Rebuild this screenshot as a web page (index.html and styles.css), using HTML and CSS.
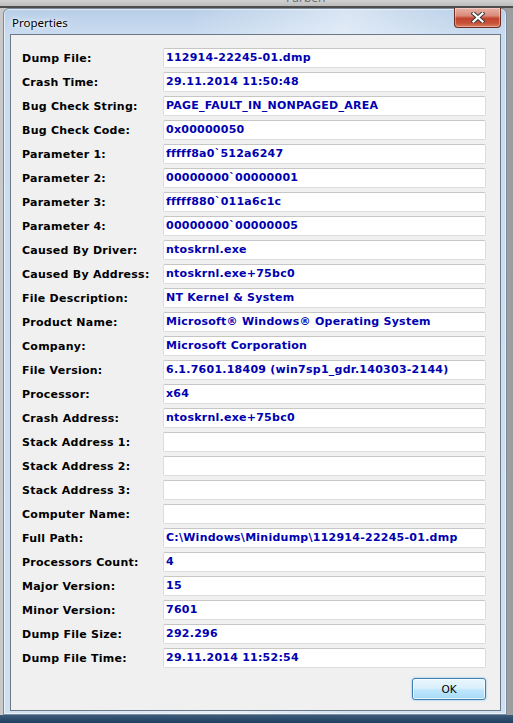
FILE: index.html
```html
<!DOCTYPE html>
<html>
<head>
<meta charset="utf-8">
<title>Properties</title>
<link rel="stylesheet" href="styles.css">
</head>
<body>
<div class="screen">
  <div class="topstrip"><span class="behind">Farben</span></div>
  <div class="window">
    <div class="titlebar">
      <span class="title">Properties</span>
      <div class="close">
        <svg width="14" height="11" viewBox="0 0 14 11">
          <path d="M2.5 1.5 L11.5 9.5 M11.5 1.5 L2.5 9.5" stroke="#3a3a3a" stroke-width="4.2" stroke-linecap="square"/>
          <path d="M2.5 1.5 L11.5 9.5 M11.5 1.5 L2.5 9.5" stroke="#ffffff" stroke-width="2.2" stroke-linecap="square"/>
        </svg>
      </div>
    </div>
    <div class="client">
      <div class="rows">
        <div class="row"><span class="label">Dump File:</span><span class="value">112914-22245-01.dmp</span></div>
        <div class="row"><span class="label">Crash Time:</span><span class="value">29.11.2014 11:50:48</span></div>
        <div class="row"><span class="label">Bug Check String:</span><span class="value">PAGE_FAULT_IN_NONPAGED_AREA</span></div>
        <div class="row"><span class="label">Bug Check Code:</span><span class="value">0x00000050</span></div>
        <div class="row"><span class="label">Parameter 1:</span><span class="value">fffff8a0`512a6247</span></div>
        <div class="row"><span class="label">Parameter 2:</span><span class="value">00000000`00000001</span></div>
        <div class="row"><span class="label">Parameter 3:</span><span class="value">fffff880`011a6c1c</span></div>
        <div class="row"><span class="label">Parameter 4:</span><span class="value">00000000`00000005</span></div>
        <div class="row"><span class="label">Caused By Driver:</span><span class="value">ntoskrnl.exe</span></div>
        <div class="row"><span class="label">Caused By Address:</span><span class="value">ntoskrnl.exe+75bc0</span></div>
        <div class="row"><span class="label">File Description:</span><span class="value">NT Kernel &amp; System</span></div>
        <div class="row"><span class="label">Product Name:</span><span class="value">Microsoft® Windows® Operating System</span></div>
        <div class="row"><span class="label">Company:</span><span class="value">Microsoft Corporation</span></div>
        <div class="row"><span class="label">File Version:</span><span class="value">6.1.7601.18409 (win7sp1_gdr.140303-2144)</span></div>
        <div class="row"><span class="label">Processor:</span><span class="value">x64</span></div>
        <div class="row"><span class="label">Crash Address:</span><span class="value">ntoskrnl.exe+75bc0</span></div>
        <div class="row"><span class="label">Stack Address 1:</span><span class="value"></span></div>
        <div class="row"><span class="label">Stack Address 2:</span><span class="value"></span></div>
        <div class="row"><span class="label">Stack Address 3:</span><span class="value"></span></div>
        <div class="row"><span class="label">Computer Name:</span><span class="value"></span></div>
        <div class="row"><span class="label">Full Path:</span><span class="value">C:\Windows\Minidump\112914-22245-01.dmp</span></div>
        <div class="row"><span class="label">Processors Count:</span><span class="value">4</span></div>
        <div class="row"><span class="label">Major Version:</span><span class="value">15</span></div>
        <div class="row"><span class="label">Minor Version:</span><span class="value">7601</span></div>
        <div class="row"><span class="label">Dump File Size:</span><span class="value">292.296</span></div>
        <div class="row"><span class="label">Dump File Time:</span><span class="value">29.11.2014 11:52:54</span></div>
      </div>
      <div class="buttons">
        <button class="ok">OK</button>
      </div>
    </div>
  </div>
  <div class="taskbar"></div>
</div>
</body>
</html>
```

FILE: styles.css
```css
html, body {
  margin: 0;
  padding: 0;
}
body {
  width: 513px;
  height: 723px;
  overflow: hidden;
  background: linear-gradient(to right, #c9c9c9 0%, #bdbdbd 80%, #9c9c9c 100%);
}
.screen {
  display: flex;
  flex-direction: column;
  width: 513px;
  height: 723px;
}
.topstrip {
  height: 6px;
  border-bottom: 2px solid #4d4d4d;
  background: linear-gradient(#d2d2d2, #bcbcbc);
  overflow: hidden;
  display: flex;
}
.behind {
  font-family: "Noto Sans", sans-serif;
  font-size: 12px;
  line-height: 12px;
  color: #6a6a6a;
  margin-left: 286px;
  margin-top: -8px;
}
.window {
  width: 504px;
  height: 707px;
  margin-left: 3px;
  box-sizing: border-box;
  border: 1px solid #7b8a9a;
  border-radius: 6px 6px 0 0;
  background:
    linear-gradient(100deg, rgba(255,255,255,0) 30%, rgba(255,255,255,0.45) 55%, rgba(255,255,255,0) 75%),
    linear-gradient(#b8cfe8 0px, #cadcf0 26px, #cfe0f2 100%);
  box-shadow: inset 0 0 0 1px rgba(255,255,255,0.55);
  display: flex;
  flex-direction: column;
}
.titlebar {
  height: 25px;
  display: flex;
  align-items: flex-start;
}
.title {
  font-family: "Noto Sans", sans-serif;
  font-size: 11.5px;
  color: #000;
  margin-left: 8px;
  margin-top: 6px;
  line-height: 16px;
  text-shadow: 0 0 6px #ffffff, 0 0 3px #ffffff;
}
.close {
  margin-left: auto;
  margin-right: 5px;
  margin-top: -1px;
  width: 47px;
  height: 20px;
  box-sizing: border-box;
  border: 1px solid #6b2c22;
  border-top: none;
  border-radius: 0 0 4px 4px;
  background: linear-gradient(#eab3a7 0%, #d98b7b 40%, #c2432d 55%, #c8513a 80%, #dc7d5e 100%);
  box-shadow: inset 0 0 0 1px rgba(255,255,255,0.35);
  display: flex;
  align-items: center;
  justify-content: center;
}
.client {
  margin-left: 6px;
  width: 491px;
  height: 677px;
  box-sizing: border-box;
  border: 1px solid #6c7886;
  background: #f0f0f0;
  padding: 13px 14px 0 11px;
  display: flex;
  flex-direction: column;
}
.rows {
  display: flex;
  flex-direction: column;
  gap: 4px;
}
.row {
  display: grid;
  grid-template-columns: 141px 323px;
  height: 20px;
  align-items: center;
}
.label {
  font-family: "DejaVu Sans", sans-serif;
  font-weight: bold;
  font-size: 11px;
  letter-spacing: 0.25px;
  color: #000;
  white-space: nowrap;
}
.value {
  height: 20px;
  box-sizing: border-box;
  background: #fff;
  border: 1px solid #dcdcdc;
  border-top-color: #c6c6c6;
  border-radius: 2px;
  padding-left: 2px;
  font-family: "DejaVu Sans", sans-serif;
  font-weight: bold;
  font-size: 11px;
  letter-spacing: 0.25px;
  line-height: 18px;
  color: #0000b0;
  white-space: nowrap;
  overflow: hidden;
}
.buttons {
  display: flex;
  justify-content: flex-end;
  margin-top: 10px;
}
.ok {
  width: 74px;
  height: 22px;
  box-sizing: border-box;
  border: 1px solid #3c7fb1;
  border-radius: 3px;
  background: linear-gradient(#eaf6fd 0%, #d9f0fc 45%, #bee6fd 55%, #a7d9f5 100%);
  box-shadow: inset 0 0 0 1px rgba(255,255,255,0.7), 0 0 2px #5fb8ec;
  font-family: "DejaVu Sans", sans-serif;
  font-size: 10.5px;
  color: #000;
  padding: 0;
}
.taskbar {
  height: 8px;
  background: linear-gradient(#3d5c7c, #1f3d5e);
}
```
